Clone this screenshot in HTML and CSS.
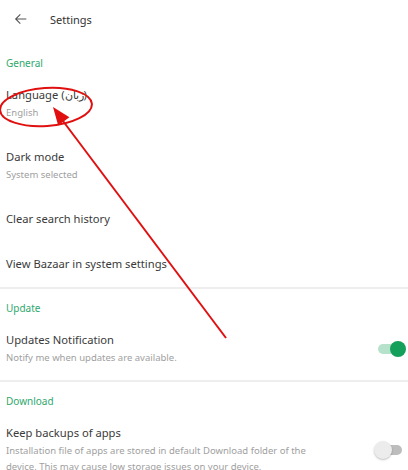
FILE: index.html
```html
<!DOCTYPE html>
<html lang="en">
  <head>
    <title>Settings</title>
    <link rel="stylesheet" href="styles.css">
  </head>
  <body>
    <div class="screen">
      <header class="topbar">
        <svg class="back" width="16" height="16" viewBox="0 0 24 24">
          <path d="M20 12H4.5M11 5l-7 7 7 7" fill="none" stroke="#555" stroke-width="1.6" />
        </svg>
        <span class="topbar-title">Settings</span>
      </header>

      <section class="group">
        <h2 class="group-title">General</h2>
        <div class="item">
          <div class="item-text">
            <div class="item-main">Language (<span lang="fa">زبان</span>)</div>
            <div class="item-sub">English</div>
          </div>
        </div>
        <div class="item">
          <div class="item-text">
            <div class="item-main">Dark mode</div>
            <div class="item-sub">System selected</div>
          </div>
        </div>
        <div class="item single">
          <div class="item-text">
            <div class="item-main">Clear search history</div>
          </div>
        </div>
        <div class="item single">
          <div class="item-text">
            <div class="item-main">View Bazaar in system settings</div>
          </div>
        </div>
      </section>

      <section class="group">
        <h2 class="group-title">Update</h2>
        <div class="item">
          <div class="item-text">
            <div class="item-main">Updates Notification</div>
            <div class="item-sub">Notify me when updates are available.</div>
          </div>
          <span class="switch on"><span class="knob"></span></span>
        </div>
      </section>

      <section class="group">
        <h2 class="group-title">Download</h2>
        <div class="item">
          <div class="item-text">
            <div class="item-main">Keep backups of apps</div>
            <div class="item-sub">Installation file of apps are stored in default Download folder of the device. This may cause low storage issues on your device.</div>
          </div>
          <span class="switch"><span class="knob"></span></span>
        </div>
      </section>

      <!-- red markup drawn over the screenshot -->
      <svg class="markup" width="408" height="470" viewBox="0 0 408 470">
        <ellipse cx="46" cy="107" rx="46" ry="19" transform="rotate(-4 46 107)" fill="none" stroke="#e01010" stroke-width="2" />
        <line x1="226" y1="338" x2="63" y2="121" stroke="#e01010" stroke-width="2" />
        <polygon points="53,107 69.4,117.2 58.2,125.6" fill="#e01010" />
      </svg>
    </div>
  </body>
</html>
```

FILE: styles.css
```css
body {
  margin: 0;
  background: #fff;
  font-family: "Noto Sans", "Open Sans", sans-serif;
  color: #3a3a3a;
}
.screen {
  position: relative;
  width: 408px;
  height: 470px;
  overflow: hidden;
}
.topbar {
  display: flex;
  align-items: center;
  height: 38px;
  margin-bottom: 6px;
}
.back {
  margin-left: 13px;
}
.topbar-title {
  margin-left: 21px;
  font-size: 11px;
  color: #333;
}
.group + .group {
  border-top: 2px solid #eeeeee;
}
.group-title {
  margin: 0;
  padding: 10px 6px 1px;
  font-size: 10px;
  line-height: 18px;
  font-weight: normal;
  color: #2fa86d;
}
.item {
  display: flex;
  align-items: center;
  padding: 13px 6px 14px;
}
.item-text {
  flex: 1;
}
.item-main {
  font-size: 11.2px;
  line-height: 18px;
  color: #3a3a3a;
}
.item-sub {
  margin-top: 1px;
  font-size: 9.5px;
  line-height: 16px;
  color: #a0a0a0;
  max-width: 320px;
}
.switch {
  position: relative;
  width: 24px;
  height: 10px;
  margin: 0 0 0 40px;
  border-radius: 5px;
  background: #bdbdbd;
}
.switch .knob {
  position: absolute;
  top: -4px;
  left: -4px;
  width: 18px;
  height: 18px;
  border-radius: 50%;
  background: #ececec;
  box-shadow: 0 1px 2px rgba(0, 0, 0, 0.25);
}
.switch.on {
  background: #b6e2cb;
}
.switch.on .knob {
  left: auto;
  right: -4px;
  top: -3px;
  width: 16px;
  height: 16px;
  background: #14a05a;
  box-shadow: none;
}
.markup {
  position: absolute;
  left: 0;
  top: 0;
  pointer-events: none;
}
```
